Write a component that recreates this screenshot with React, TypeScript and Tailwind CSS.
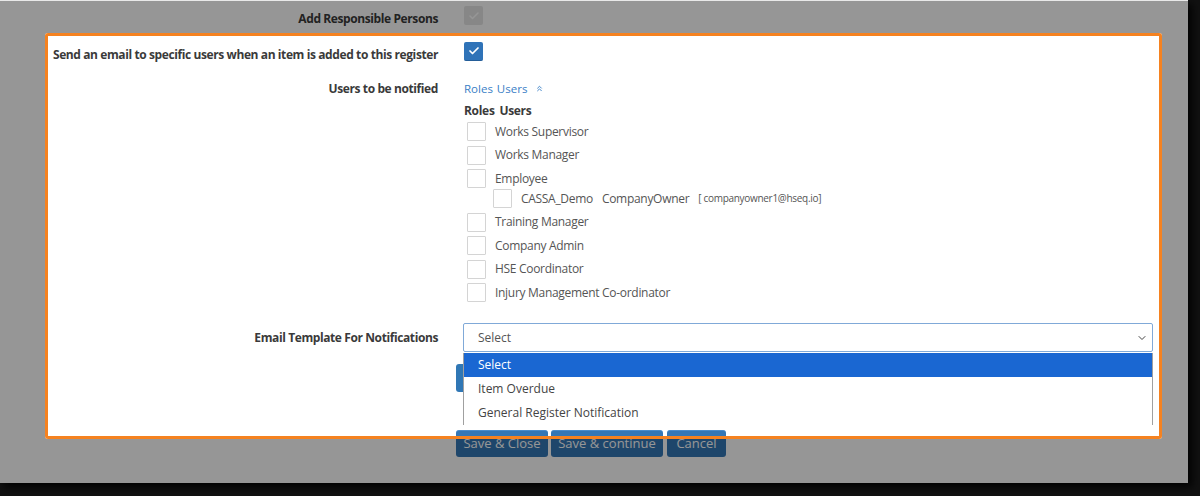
import { Check, ChevronDown, ChevronsUp } from "lucide-react";

const roles = [
  "Works Supervisor",
  "Works Manager",
  "Employee",
  "Training Manager",
  "Company Admin",
  "HSE Coordinator",
  "Injury Management Co-ordinator",
];

const templates = ["Select", "Item Overdue", "General Register Notification"];

function Box() {
  return (
    <span className="h-[19px] w-[19px] shrink-0 rounded-[1px] border border-[#d4d4d4] bg-white" />
  );
}

function Label({ children }: { children: React.ReactNode }) {
  return (
    <div className="w-[438px] shrink-0 text-right text-[12px] leading-[16px] font-bold tracking-[-0.4px] text-[#3a3a3a]">
      {children}
    </div>
  );
}

export default function App() {
  return (
    <div className="w-[1200px] h-[496px] overflow-hidden bg-[#111]">
      <div className="relative w-[1188px] h-[483px] overflow-hidden border-t border-[#e8e8e8] bg-white font-['Open_Sans',sans-serif] shadow-[4px_4px_8px_rgba(0,0,0,0.9)]">
        {/* Add Responsible Persons */}
        <div className="flex gap-[26px] pt-[5px]">
          <div className="mt-[5px]">
            <Label>Add Responsible Persons</Label>
          </div>
          <span className="flex h-[19px] w-[19px] items-center justify-center rounded-[2px] bg-[#e6e6e6]">
            <Check size={12} strokeWidth={3} className="text-white" />
          </span>
        </div>

        {/* Send email */}
        <div className="flex gap-[26px] mt-[15px]">
          <div className="mt-[5px]">
            <Label>
              Send an email to specific users when an item is added to this register
            </Label>
          </div>
          <span className="flex h-[19px] w-[19px] items-center justify-center rounded-[2px] bg-[#2f73b8] border-b border-[#245d98]">
            <Check size={12} strokeWidth={3.5} className="text-white" />
          </span>
        </div>

        {/* Users to be notified */}
        <div className="flex gap-[26px] mt-[18px]">
          <Label>Users to be notified</Label>
          <div className="flex flex-col">
            <div className="flex items-center text-[11.5px] leading-[16px] text-[#3a80c6]">
              <span>Roles</span>
              <span className="ml-[4px]">Users</span>
              <ChevronsUp size={9} strokeWidth={2.5} className="ml-[8px] mt-[-2px]" />
            </div>
            <div className="mt-[6px] text-[12px] leading-[16px] font-bold tracking-[-0.3px] text-[#3a3a3a]">
              Roles <span className="ml-[2px]">Users</span>
            </div>
            <div className="mt-[3px] ml-[3px] flex flex-col gap-[4.5px] text-[12px] tracking-[-0.3px] text-[#555]">
              {roles.map((role) => (
                <div key={role} className="flex flex-col">
                  <div className="flex h-[19px] items-center gap-[9px]">
                    <Box />
                    <span>{role}</span>
                  </div>
                  {role === "Employee" && (
                    <div className="mt-[1px] ml-[26px] flex h-[19px] items-center gap-[9px]">
                      <Box />
                      <span>CASSA_Demo</span>
                      <span>CompanyOwner</span>
                      <span className="text-[10px] text-[#555]">[ companyowner1@hseq.io]</span>
                    </div>
                  )}
                </div>
              ))}
            </div>
          </div>
        </div>

        {/* Email template */}
        <div className="flex gap-[25px] mt-[21px]">
          <div className="flex h-[29px] items-center">
            <Label>Email Template For Notifications</Label>
          </div>
          <div className="flex flex-col">
            <div className="relative w-[690px]">
              <div className="flex h-[29px] items-center justify-between rounded-[2px] border border-[#80a9d8] bg-white pl-[14px] pr-[4px] text-[12px] text-[#555]">
                <span>Select</span>
                <ChevronDown size={12} strokeWidth={2} className="text-[#444]" />
              </div>
              <div className="absolute left-0 right-0 top-[30px] z-10 border-x border-[#a0a0a0] bg-white text-[12px]">
                {templates.map((t, i) => (
                  <div
                    key={t}
                    className={`flex h-[24px] items-center pl-[14px] ${
                      i === 0 ? "bg-[#1a67d2] text-white" : "text-[#444]"
                    }`}
                  >
                    {t}
                  </div>
                ))}
              </div>
            </div>
            <div className="mt-[12px] ml-[-7px] flex">
              <button aria-label="Add" className="h-[28px] w-[70px] rounded-[3px] bg-[#3077b5]" />
            </div>
            <div className="mt-[38px] ml-[-7px] flex gap-[3px]">
              <button className="h-[27px] w-[92px] rounded-[3px] border-t border-[#4a8ccc] bg-[#3477b6] text-[13px] text-white">
                Save &amp; Close
              </button>
              <button className="h-[27px] w-[112px] rounded-[3px] border-t border-[#4a8ccc] bg-[#3477b6] text-[13px] text-white">
                Save &amp; continue
              </button>
              <button className="ml-[1px] h-[27px] w-[59px] rounded-[3px] border-t border-[#4a8ccc] bg-[#3477b6] text-[13px] text-white">
                Cancel
              </button>
            </div>
          </div>
        </div>

        {/* Highlight overlay */}
        <div className="pointer-events-none absolute left-[45px] top-[32px] z-20 h-[406px] w-[1117px] rounded-[3px] border-[3px] border-[#f58220] shadow-[0_0_0_2000px_rgba(0,0,0,0.41)]" />
      </div>
    </div>
  );
}
